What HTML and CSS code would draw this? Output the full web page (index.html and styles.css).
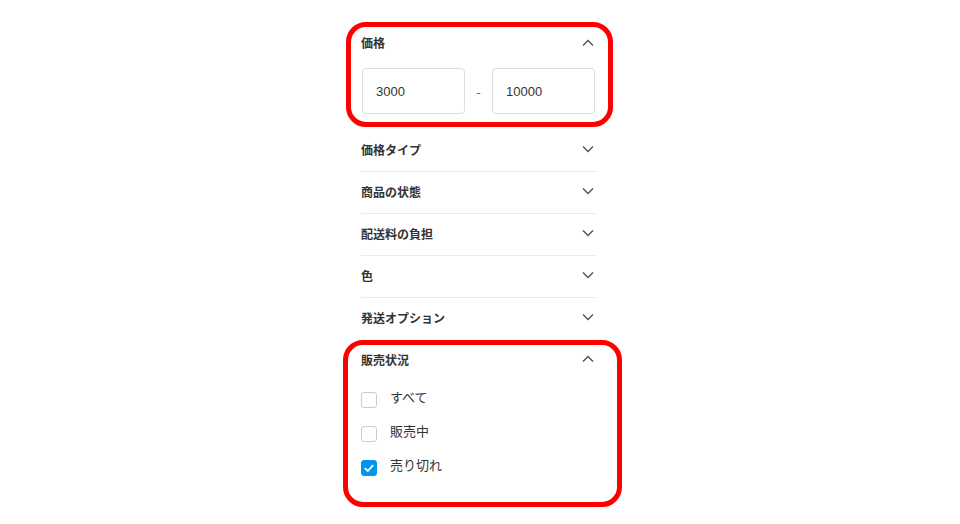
FILE: index.html
```html
<!DOCTYPE html>
<html lang="ja">
<head>
    <meta charset="UTF-8">
    <meta name="viewport" content="width=device-width, initial-scale=1.0">
    <title>絞り込み</title>
    <link rel="stylesheet" href="styles.css">
</head>
<body>
    <div class="filters">
        <!-- 価格 -->
        <section class="section open marked marked-price">
            <div class="header">
                <span>価格</span>
                <svg class="chev" viewBox="0 0 12 8"><path d="M1 6.5L6 1.5L11 6.5"/></svg>
            </div>
            <div class="price-range">
                <div class="price-input">3000</div>
                <span class="dash">-</span>
                <div class="price-input">10000</div>
            </div>
        </section>

        <section class="section row">
            <div class="header">
                <span>価格タイプ</span>
                <svg class="chev" viewBox="0 0 12 8"><path d="M1 1.5L6 6.5L11 1.5"/></svg>
            </div>
        </section>
        <section class="section row">
            <div class="header">
                <span>商品の状態</span>
                <svg class="chev" viewBox="0 0 12 8"><path d="M1 1.5L6 6.5L11 1.5"/></svg>
            </div>
        </section>
        <section class="section row">
            <div class="header">
                <span>配送料の負担</span>
                <svg class="chev" viewBox="0 0 12 8"><path d="M1 1.5L6 6.5L11 1.5"/></svg>
            </div>
        </section>
        <section class="section row">
            <div class="header">
                <span>色</span>
                <svg class="chev" viewBox="0 0 12 8"><path d="M1 1.5L6 6.5L11 1.5"/></svg>
            </div>
        </section>
        <section class="section row last">
            <div class="header">
                <span>発送オプション</span>
                <svg class="chev" viewBox="0 0 12 8"><path d="M1 1.5L6 6.5L11 1.5"/></svg>
            </div>
        </section>

        <!-- 販売状況 -->
        <section class="section open marked marked-status">
            <div class="header">
                <span>販売状況</span>
                <svg class="chev" viewBox="0 0 12 8"><path d="M1 6.5L6 1.5L11 6.5"/></svg>
            </div>
            <ul class="checks">
                <li><span class="box"></span>すべて</li>
                <li><span class="box"></span>販売中</li>
                <li><span class="box checked"><svg viewBox="0 0 16 16"><path d="M3.8 8.2L6.8 11L12.2 5.2"/></svg></span>売り切れ</li>
            </ul>
        </section>
    </div>
</body>
</html>
```

FILE: styles.css
```css
body {
    margin: 0;
    background: #fff;
    font-family: "Noto Sans CJK JP", "Noto Sans", sans-serif;
    color: #333;
}

.filters {
    width: 236px;
    margin: 0 auto;
    padding-top: 22px;
    padding-right: 2px;
}

.section {
    position: relative;
}

.header {
    height: 41px;
    box-sizing: border-box;
    display: flex;
    align-items: center;
    justify-content: space-between;
    font-size: 12px;
    font-weight: 700;
    color: #333;
}

.row .header,
.marked-status .header {
    padding-bottom: 3px;
}

.chev {
    width: 12px;
    height: 8px;
    margin-right: 3px;
    fill: none;
    stroke: #555;
    stroke-width: 1.5;
}

.row {
    border-bottom: 1px solid #ebebeb;
}

.row.last {
    border-bottom: none;
    margin-bottom: 1px;
}

/* 価格 */
.price-range {
    display: flex;
    align-items: center;
    width: 233px;
    margin: 5px 0 0 1px;
    padding-bottom: 16px;
}

.price-input {
    width: 103px;
    height: 46px;
    box-sizing: border-box;
    border: 1px solid #ddd;
    border-radius: 4px;
    display: flex;
    align-items: center;
    padding-left: 13px;
    font-family: "Liberation Sans", Arial, sans-serif;
    font-size: 13px;
    color: #333;
}

.dash {
    flex: 1;
    text-align: center;
    font-size: 13px;
    color: #666;
}

/* 販売状況 */
.checks {
    list-style: none;
    margin: 0;
    padding: 0 0 24px;
}

.checks li {
    display: flex;
    align-items: center;
    height: 34px;
    box-sizing: border-box;
    padding-bottom: 4px;
    font-size: 13px;
    color: #333;
}

.box {
    width: 16px;
    height: 16px;
    box-sizing: border-box;
    border: 1.5px solid #ccc;
    border-radius: 3px;
    margin-right: 13px;
    margin-top: 8px;
    display: flex;
}

.box.checked {
    background: #0095ee;
    border-color: #0095ee;
}

.box svg {
    width: 16px;
    height: 16px;
    margin: -1.5px;
    fill: none;
    stroke: #fff;
    stroke-width: 1.8;
}

/* 赤枠（注釈） */
.marked::after {
    content: '';
    position: absolute;
    border: 5px solid #f00;
    border-radius: 20px;
    pointer-events: none;
}

.marked-price::after {
    top: 0;
    left: -15px;
    right: -16px;
    bottom: 3px;
}

.marked-status::after {
    top: 0;
    left: -18px;
    right: -25px;
    bottom: 0;
}
```
